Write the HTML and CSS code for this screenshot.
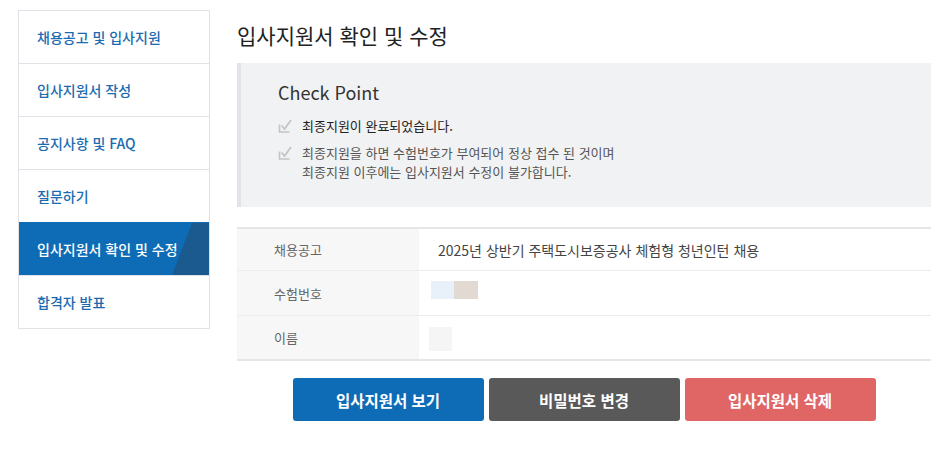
FILE: index.html
```html
<!DOCTYPE html>
<html lang="ko">
<head>
<meta charset="UTF-8" />
<meta name="viewport" content="width=device-width, initial-scale=1.0" />
<title>입사지원서 확인 및 수정</title>
<link rel="stylesheet" href="styles.css">
</head>
<body>
<div class="page">
  <!-- ------ SIDE MENU ------ -->
  <nav class="side-menu">
    <a href="#">채용공고 및 입사지원</a>
    <a href="#">입사지원서 작성</a>
    <a href="#">공지사항 및 FAQ</a>
    <a href="#">질문하기</a>
    <a href="#" class="active">입사지원서 확인 및 수정</a>
    <a href="#">합격자 발표</a>
  </nav>

  <!-- ------ CONTENT ------ -->
  <main class="content">
    <h1 class="page-title">입사지원서 확인 및 수정</h1>

    <section class="check-box">
      <h2>Check Point</h2>
      <ul>
        <li class="strong">
          <svg class="chk" viewBox="0 0 14 14" width="14" height="14"><path d="M1.5 5.5v7.5h10" fill="none" stroke="#c4c4c4" stroke-width="1.6"/><path d="M3.5 6.5l3 3.5 6.5-9" fill="none" stroke="#c4c4c4" stroke-width="1.8"/></svg>
          <span>최종지원이 완료되었습니다.</span>
        </li>
        <li>
          <svg class="chk" viewBox="0 0 14 14" width="14" height="14"><path d="M1.5 5.5v7.5h10" fill="none" stroke="#c4c4c4" stroke-width="1.6"/><path d="M3.5 6.5l3 3.5 6.5-9" fill="none" stroke="#c4c4c4" stroke-width="1.8"/></svg>
          <span>최종지원을 하면 수험번호가 부여되어 정상 접수 된 것이며<br>최종지원 이후에는 입사지원서 수정이 불가합니다.</span>
        </li>
      </ul>
    </section>

    <table class="info">
      <tr>
        <th>채용공고</th>
        <td>2025년 상반기 주택도시보증공사 체험형 청년인턴 채용</td>
      </tr>
      <tr>
        <th>수험번호</th>
        <td><span class="masks"><span class="mask mask-blue"></span><span class="mask mask-beige"></span></span></td>
      </tr>
      <tr>
        <th>이름</th>
        <td><span class="masks"><span class="mask mask-grey"></span></span></td>
      </tr>
    </table>

    <div class="buttons">
      <a href="#" class="btn btn-blue">입사지원서 보기</a>
      <a href="#" class="btn btn-grey">비밀번호 변경</a>
      <a href="#" class="btn btn-red">입사지원서 삭제</a>
    </div>
  </main>
</div>
</body>
</html>
```

FILE: styles.css
```css
/* ---------- Global ---------- */
:root {
  --blue: #0e6cb6;
  --font: "Noto Sans CJK KR", "Noto Sans", sans-serif;
}

body {
  margin: 0;
  font-family: var(--font);
  color: #333;
  background: #fff;
}

a { text-decoration: none; }

.page {
  display: flex;
  align-items: flex-start;
  gap: 27px;
  padding: 10px 0 0 18px;
}

/* ---------- Side menu ---------- */
.side-menu {
  width: 190px;
  flex: none;
  display: flex;
  flex-direction: column;
  border: 1px solid #e1e2e8;
}
.side-menu a {
  position: relative;
  height: 52px;
  display: flex;
  align-items: center;
  padding-left: 18px;
  font-size: 14px;
  font-weight: 500;
  color: #1b6bb0;
  border-top: 1px solid #e1e2e8;
  overflow: hidden;
}
.side-menu a:first-child { border-top: 0; }
.side-menu a.active {
  color: #fff;
  background: var(--blue);
  border-top-color: var(--blue);
}
/* darker diagonal slice on the right of the active item */
.side-menu a.active::after {
  content: "";
  position: absolute;
  inset: 0;
  background: #1a5a8f;
  clip-path: polygon(173px 0, 100% 0, 100% 100%, 153px 100%);
}

/* ---------- Content ---------- */
.content {
  width: 694px;
  flex: none;
}

.page-title {
  margin: 11px 0 14px;
  font-size: 21px;
  font-weight: 400;
  color: #222;
  line-height: 28px;
}

/* ----- Check point box ----- */
.check-box {
  background: #f1f2f4;
  border-left: 4px solid #dfe3ea;
  padding: 16px 20px 26px 37px;
}
.check-box h2 {
  margin: 0 0 11px;
  font-size: 18px;
  font-weight: 400;
  color: #333;
  line-height: 26px;
}
.check-box ul {
  list-style: none;
  margin: 0;
  padding: 0;
}
.check-box li {
  display: flex;
  gap: 10px;
  font-size: 13px;
  line-height: 19px;
  color: #555;
  margin-bottom: 8px;
}
.check-box li:last-child { margin-bottom: 0; }
.check-box li.strong { color: #222; }
.chk { flex: none; margin-top: 3px; }

/* ----- Info table ----- */
.info {
  width: 100%;
  margin-top: 20px;
  border-collapse: collapse;
  border-top: 2px solid #e6e6e6;
  font-size: 14px;
}
.info th,
.info td {
  height: 43px;
  border-bottom: 1px solid #ececec;
  padding: 0;
  text-align: left;
  font-weight: 400;
}
.info tr:first-child th,
.info tr:first-child td { height: 41px; }
.info tr:nth-child(2) th,
.info tr:nth-child(2) td { height: 44px; }
.info tr:last-child th,
.info tr:last-child td { border-bottom: 2px solid #e6e6e6; }
.info th {
  width: 145px;
  padding-left: 37px;
  background: #f7f7f7;
  color: #666;
  font-size: 13px;
}
.info td {
  padding-left: 19px;
  color: #444;
}

.masks {
  display: inline-flex;
  vertical-align: middle;
}
.mask { display: block; height: 18px; }
.mask-blue  { width: 23px; background: #e8f1fa; margin: 0 0 6px -7px; }
.mask-beige { width: 24px; background: #e2d9d3; margin-bottom: 6px; }
.mask-grey  { width: 23px; height: 24px; background: #f5f5f5; margin: 2px 0 0 -9px; }

/* ----- Buttons ----- */
.buttons {
  display: flex;
  justify-content: center;
  gap: 5px;
  margin-top: 17px;
}
.btn {
  width: 191px;
  height: 43px;
  display: flex;
  align-items: center;
  justify-content: center;
  border-radius: 3px;
  color: #fff;
  font-size: 15.5px;
  font-weight: 700;
}
.btn-blue { background: var(--blue); }
.btn-grey { background: #595959; }
.btn-red  { background: #e06666; }
```
